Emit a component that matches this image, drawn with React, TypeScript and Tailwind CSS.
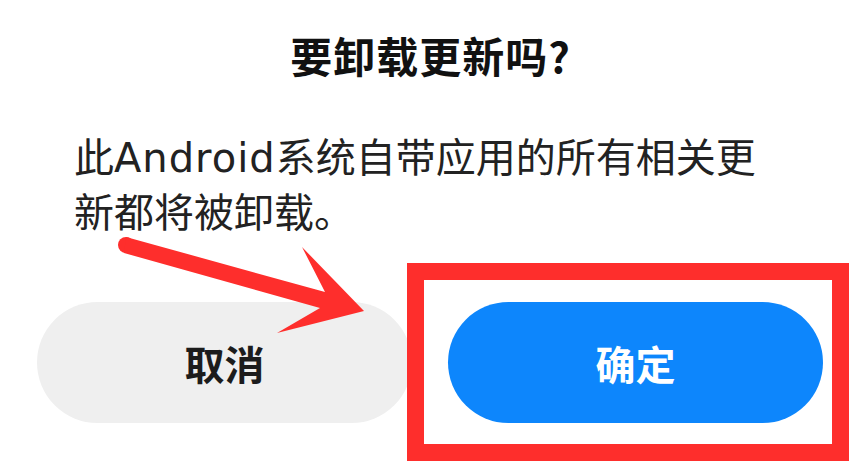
const font = { fontFamily: '"Noto Sans CJK SC", "Noto Sans", sans-serif' };

const App = () => {
  return (
    <div
      className="relative w-[861px] h-[476px] overflow-hidden bg-white"
      style={font}
    >
      {/* Dialog title */}
      <h1 className="pt-[34px] text-center text-[42px] leading-[42px] font-bold tracking-[1px] text-[#111111]">
        要卸载更新吗?
      </h1>

      {/* Message */}
      <p className="mt-[53px] h-[104px] px-[74px] text-[40px] leading-[52px] text-[#222222]">
        此
        <span className="font-['DejaVu_Sans'] tracking-[1px]">Android</span>
        系统自带应用的所有相关更新都将被卸载。
      </p>

      {/* Buttons */}
      <div className="mt-[69px] flex gap-[36px] px-[37px]">
        <button className="h-[121px] w-[375px] rounded-full bg-[#efefef] text-[40px] font-bold text-[#1c1c1c]">
          取消
        </button>
        <button className="h-[121px] w-[375px] rounded-full bg-[#0d86fc] text-[40px] font-bold text-white">
          确定
        </button>
      </div>

      {/* Annotation: red highlight box */}
      <div className="absolute left-[407px] top-[263px] h-[198px] w-[442px] border-[17px] border-[#fe2e2c]" />

      {/* Annotation: arrow */}
      <svg
        className="pointer-events-none absolute left-0 top-0"
        width="861"
        height="476"
        viewBox="0 0 861 476"
      >
        <circle cx="126" cy="245" r="8" fill="#fe2e2c" />
        <polygon
          fill="#fe2e2c"
          points="126,237 325,292 302,247 364,311 277,333 320,308 124,253"
        />
      </svg>
    </div>
  );
};

export default App;
